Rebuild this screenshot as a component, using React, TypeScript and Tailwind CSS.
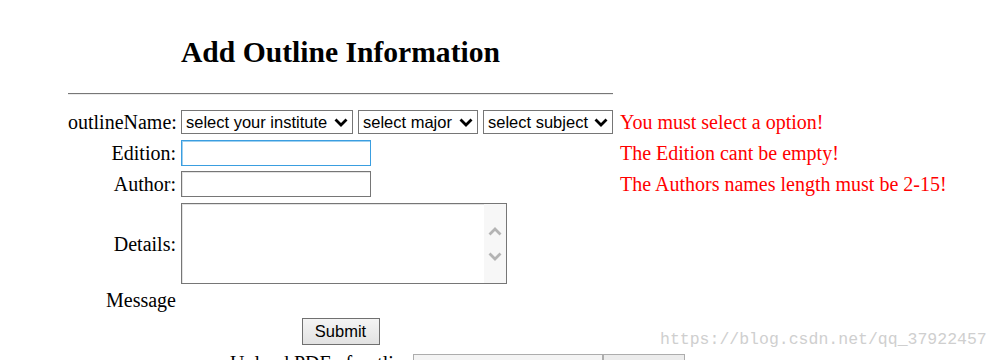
function Chevron({ className }: { className?: string }) {
  return (
    <svg viewBox="0 0 14 9" className={className} fill="none" stroke="currentColor" strokeWidth="2.8">
      <path d="M1.5 1.5 L7 7 L12.5 1.5" />
    </svg>
  )
}

function FakeSelect({ label, width }: { label: string; width: string }) {
  return (
    <div className={`relative flex h-[24px] shrink-0 items-center border border-[#767676] bg-white pl-[4px] ${width}`}>
      <span className="text-[16.5px] leading-none text-black" style={{ fontFamily: '"Liberation Sans", Arial, sans-serif' }}>
        {label}
      </span>
      <Chevron className="absolute right-[4px] top-[7px] h-[9px] w-[14px] text-black" />
    </div>
  )
}

export default function App() {
  const serif = { fontFamily: '"Liberation Serif", "Times New Roman", serif' }
  const sans = { fontFamily: '"Liberation Sans", Arial, sans-serif' }

  return (
    <div className="relative h-[360px] w-[999px] overflow-hidden bg-white text-black" style={serif}>
      <div className="ml-[68px] w-[545px] pt-[35px]">
        <h2 className="text-center text-[29.6px] font-bold leading-[34px]">Add Outline Information</h2>
        <div className="mt-[24px] h-[2px] border-t border-b border-t-[#777777] border-b-[#ececec]" />

        {/* form rows */}
        <div className="mt-[15px] flex flex-col text-[20px] leading-[24px]">
          <div className="flex h-[24px] items-center">
            <div className="w-[108px] shrink-0 text-right">outlineName:</div>
            <div className="ml-[5px] flex shrink-0 gap-[5px]">
              <FakeSelect label="select your institute" width="w-[172px]" />
              <FakeSelect label="select major" width="w-[120px]" />
              <FakeSelect label="select subject" width="w-[130px]" />
            </div>
            <div className="ml-[7px] shrink-0 whitespace-nowrap text-[#ff0000]">You must select a option!</div>
          </div>

          <div className="mt-[6px] flex h-[26px] items-center">
            <div className="w-[108px] shrink-0 text-right">Edition:</div>
            <input className="ml-[5px] h-[26px] w-[190px] shrink-0 border border-[#3a9ee0] bg-white shadow-[inset_1px_1px_0_#9fd0f0] outline-none" />
            <div className="ml-[249px] shrink-0 whitespace-nowrap text-[#ff0000]">The Edition cant be empty!</div>
          </div>

          <div className="mt-[5px] flex h-[26px] items-center">
            <div className="w-[108px] shrink-0 text-right">Author:</div>
            <input className="ml-[5px] h-[26px] w-[190px] shrink-0 border border-[#767676] bg-white shadow-[inset_1px_1px_0_#e3e3e3] outline-none" />
            <div className="ml-[249px] shrink-0 whitespace-nowrap text-[#ff0000]">The Authors names length must be 2-15!</div>
          </div>

          <div className="mt-[6px] flex h-[81px] items-center">
            <div className="w-[108px] shrink-0 text-right">Details:</div>
            <div className="ml-[5px] flex h-[81px] w-[326px] shrink-0 border border-[#767676] bg-white shadow-[inset_1px_1px_0_#e3e3e3]">
              <textarea className="h-full flex-1 resize-none bg-transparent outline-none" />
              <div className="flex w-[22px] flex-col items-center justify-center gap-[16px] bg-[#f7f7f7] text-[#b4b4b4]">
                <svg viewBox="0 0 14 9" className="h-[9px] w-[14px]" fill="none" stroke="currentColor" strokeWidth="2.8">
                  <path d="M1.5 7.5 L7 2 L12.5 7.5" />
                </svg>
                <svg viewBox="0 0 14 9" className="h-[9px] w-[14px]" fill="none" stroke="currentColor" strokeWidth="2.8">
                  <path d="M1.5 1.5 L7 7 L12.5 1.5" />
                </svg>
              </div>
            </div>
          </div>

          <div className="mt-[4px] flex h-[24px] items-center">
            <div className="w-[108px] shrink-0 text-right">Message</div>
          </div>

          <div className="mt-[6px] flex justify-center">
            <button
              className="h-[27px] w-[78px] border border-[#707070] bg-gradient-to-b from-[#f4f4f4] to-[#e2e2e2] text-[16.5px] leading-none text-black"
              style={sans}
            >
              Submit
            </button>
          </div>

          <div className="mt-[7px] flex h-[27px] items-start">
            <div className="ml-[162px] shrink-0 whitespace-nowrap leading-[22px]">Upload PDF of outline</div>
            <div className="mt-[2px] flex h-[27px] w-[272px] shrink-0">
              <div className="h-full w-[190px] border border-[#adadad] bg-[#f4f4f4]" />
              <div
                className="flex h-full w-[82px] items-center justify-center border border-[#adadad] bg-[#ececec] text-[15px]"
                style={{ fontFamily: '"Liberation Sans", "Noto Sans CJK SC", sans-serif' }}
              >
                浏览...
              </div>
            </div>
          </div>
        </div>
      </div>

      {/* watermark */}
      <div
        className="absolute left-[660px] top-[329px] whitespace-nowrap text-[16.5px] leading-[22px] text-[#cfcfcf]"
        style={{ fontFamily: '"Liberation Mono", "Courier New", monospace' }}
      >
        https://blog.csdn.net/qq_37922457
      </div>
    </div>
  )
}
